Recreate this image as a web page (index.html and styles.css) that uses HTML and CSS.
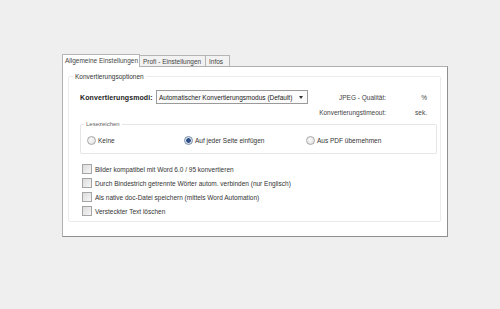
FILE: index.html
```html
<!DOCTYPE html>
<html>
<head>
<meta charset="utf-8">
<link rel="stylesheet" href="styles.css">
</head>
<body>
<div class="window">
  <div class="tabs">
    <div class="tab active">Allgemeine Einstellungen</div>
    <div class="tab">Profi - Einstellungen</div>
    <div class="tab">Infos</div>
  </div>
  <div class="panel">
    <div class="group">
      <div class="legend">Konvertierungsoptionen</div>
      <div class="row row1">
        <span class="bold">Konvertierungsmodi:</span>
        <div class="select"><span>Automatischer Konvertierungsmodus (Default)</span><span class="arrow"></span></div>
        <span class="rlabel">JPEG - Qualität:</span>
        <span class="unit">%</span>
      </div>
      <div class="row row2">
        <span class="rlabel">Konvertierungstimeout:</span>
        <span class="unit">sek.</span>
      </div>
      <div class="subgroup">
        <div class="legend2">Lesezeichen</div>
        <div class="radios">
          <label class="radio r1"><span class="rb"></span>Keine</label>
          <label class="radio r2"><span class="rb on"></span>Auf jeder Seite einfügen</label>
          <label class="radio r3"><span class="rb"></span>Aus PDF übernehmen</label>
        </div>
      </div>
      <div class="checks">
        <label class="check"><span class="cb"></span>Bilder kompatibel mit Word 6.0 / 95 konvertieren</label>
        <label class="check"><span class="cb"></span>Durch Bindestrich getrennte Wörter autom. verbinden (nur Englisch)</label>
        <label class="check"><span class="cb"></span>Als native doc-Datei speichern (mittels Word Automation)</label>
        <label class="check"><span class="cb"></span>Versteckter Text löschen</label>
      </div>
    </div>
  </div>
</div>
</body>
</html>
```
FILE: styles.css
```css
html, body {
  margin: 0;
  padding: 0;
  background: #efefef;
  width: 500px;
  height: 309px;
  overflow: hidden;
}
body {
  font-family: "Liberation Sans", Arial, sans-serif;
  font-size: 6.5px;
  color: #333;
  padding: 54px 0 0 62px;
  box-sizing: border-box;
  white-space: nowrap;
}
.window {
  width: 386px;
}
.tabs {
  display: flex;
  height: 12px;
  align-items: flex-end;
}
.tab {
  height: 11px;
  line-height: 11px;
  padding: 0 3px;
  border: 1px solid #b5b5b5;
  border-bottom: none;
  background: #f2f2f2;
  box-sizing: border-box;
  margin-right: -1px;
  color: #444;
  overflow: hidden;
}
.tab.active {
  height: 13px;
  line-height: 12px;
  background: #fff;
  position: relative;
  z-index: 1;
  margin-bottom: -1px;
  padding: 0 2px 0 2px;
  width: 78px;
}
.tab:nth-child(2) { width: 67px; }
.tab:nth-child(3) { width: 25px; }
.panel {
  height: 171px;
  background: #fff;
  border: 1px solid #b0b0b0;
  border-right-color: #8f8f8f;
  border-bottom-color: #8f8f8f;
  box-sizing: border-box;
  padding: 9px 6px 15px 5px;
}
.group {
  position: relative;
  height: 146px;
  border: 1px solid #ececec;
  border-radius: 2px;
  padding: 13px 4px 0 11px;
  box-sizing: border-box;
}
.legend {
  position: absolute;
  top: -5px;
  left: 4px;
  background: #fff;
  padding: 0 2px;
  line-height: 9px;
  color: #333;
}
.row {
  display: flex;
  align-items: center;
}
.row1 {
  height: 14px;
}
.bold {
  font-weight: bold;
  font-size: 7px;
  letter-spacing: 0.1px;
  width: 76px;
  color: #222;
}
.select {
  width: 152px;
  height: 14px;
  border: 1px solid #9a9a9a;
  box-sizing: border-box;
  display: flex;
  align-items: center;
  justify-content: space-between;
  padding: 0 4px 0 2px;
  background: #fbfbfb;
  color: #222;
}
.arrow {
  width: 0;
  height: 0;
  border-left: 2.5px solid transparent;
  border-right: 2.5px solid transparent;
  border-top: 3px solid #333;
}
.rlabel {
  width: 78px;
  text-align: right;
  color: #444;
}
.unit {
  margin-left: auto;
  margin-right: 9px;
  color: #444;
}
.row2 {
  height: 14px;
  margin-top: 1px;
  padding-left: 228px;
}
.subgroup {
  position: relative;
  margin-top: 5px;
  height: 30px;
  width: 357px;
  border: 1px solid #e6e6e6;
  border-radius: 2px;
  box-sizing: border-box;
}
.legend2 {
  position: absolute;
  top: -4px;
  left: 3px;
  background: #fff;
  padding: 0 2px;
  line-height: 7px;
  font-size: 6px;
  color: #666;
}
.radios {
  display: flex;
  align-items: center;
  height: 100%;
  padding-left: 6px;
  padding-top: 2px;
  box-sizing: border-box;
}
.radio {
  display: flex;
  align-items: center;
  gap: 2px;
  color: #333;
}
.r1 { width: 97px; }
.r2 { width: 122px; }
.rb {
  width: 9px;
  height: 9px;
  border-radius: 50%;
  border: 1px solid #a8a8a8;
  box-sizing: border-box;
  background: radial-gradient(circle at 40% 40%, #fafafa, #dcdcdc);
}
.rb.on {
  background: radial-gradient(circle, #2c4f86 0 2px, #c9d6e8 2.5px, #f2f2f2 4px);
  border-color: #7c8ea8;
}
.checks {
  margin-top: 10px;
  display: flex;
  flex-direction: column;
  gap: 4px;
  padding-left: 2px;
}
.check {
  display: flex;
  align-items: center;
  gap: 3px;
  height: 10px;
  color: #333;
}
.cb {
  width: 10px;
  height: 10px;
  border: 1px solid #a5a5a5;
  box-sizing: border-box;
  background: linear-gradient(135deg, #dcdcdc, #f6f6f6);
}
```
